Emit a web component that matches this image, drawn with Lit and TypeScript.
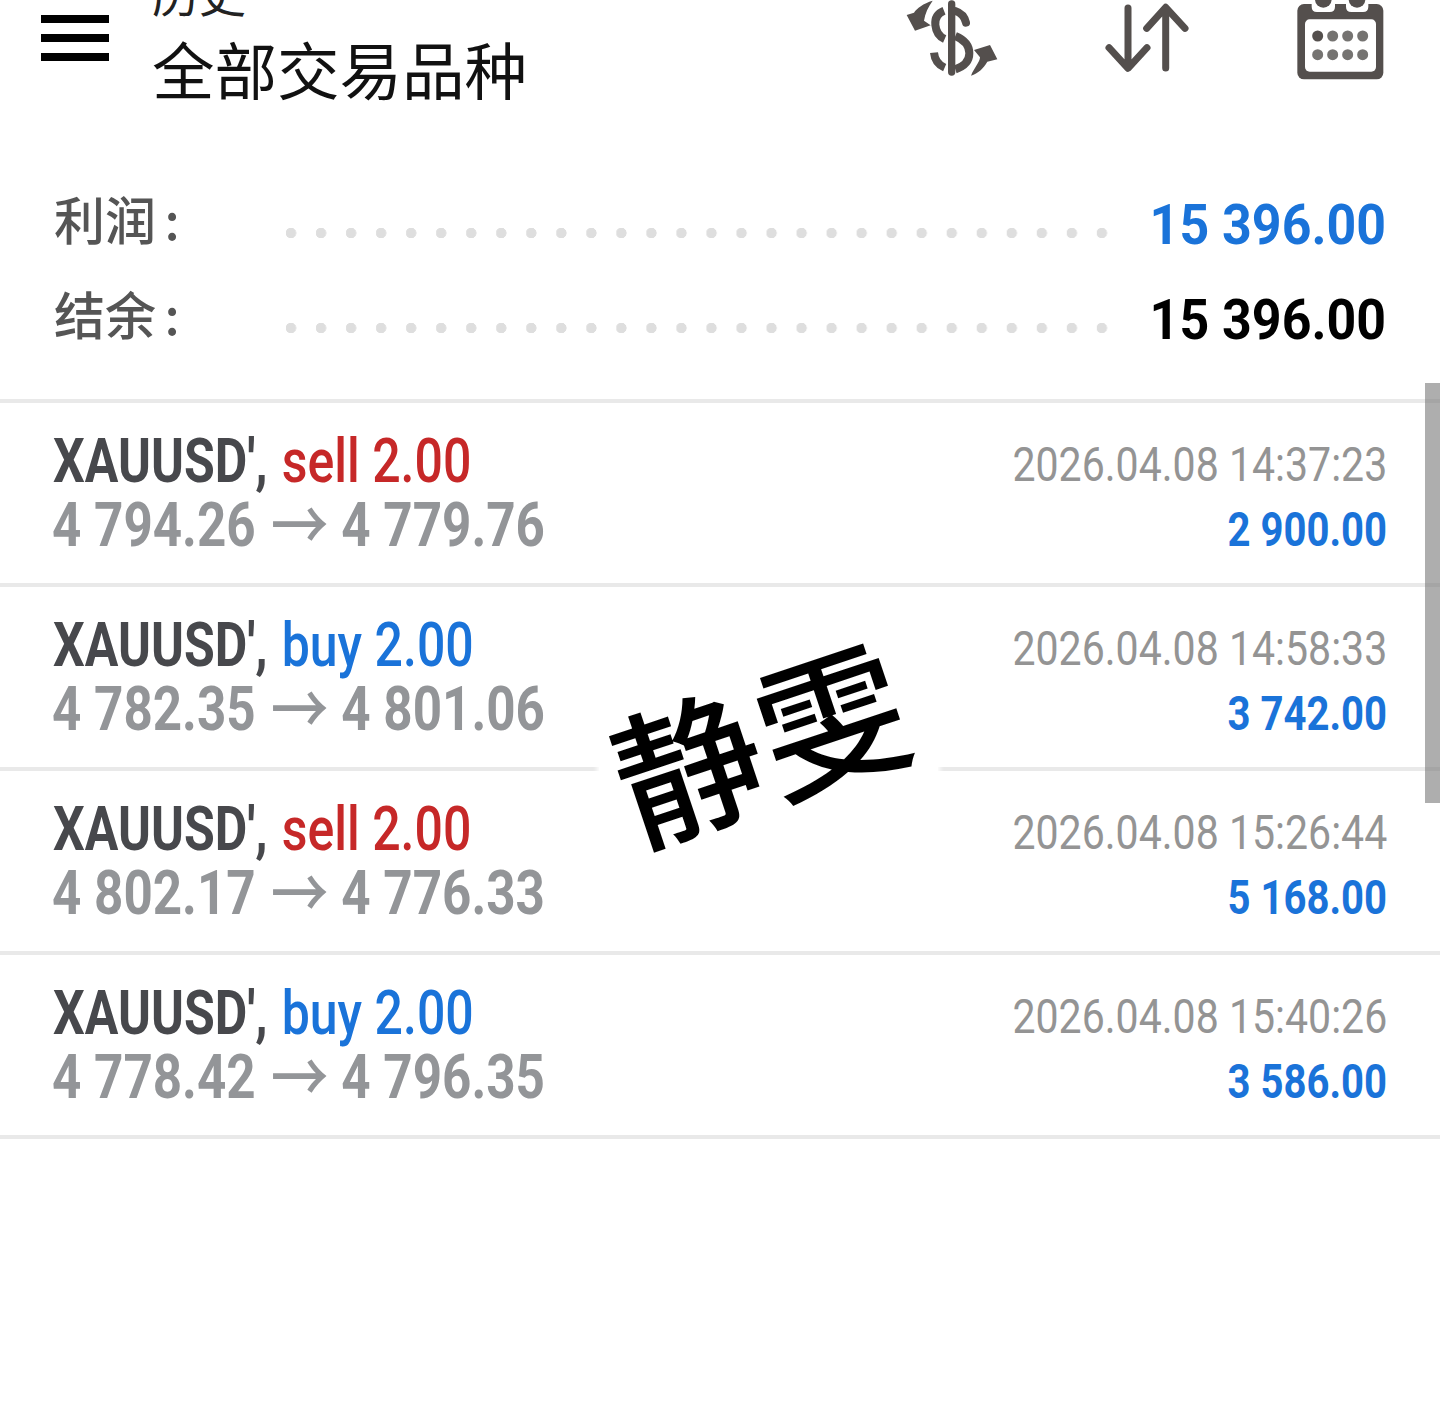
import { LitElement, html, css, svg } from "lit";
import { customElement } from "lit/decorators.js";

interface Deal { side: "sell" | "buy"; from: string; to: string; time: string; profit: string; }

const DEALS: Deal[] = [
  { side: "sell", from: "4 794.26", to: "4 779.76", time: "2026.04.08 14:37:23", profit: "2 900.00" },
  { side: "buy", from: "4 782.35", to: "4 801.06", time: "2026.04.08 14:58:33", profit: "3 742.00" },
  { side: "sell", from: "4 802.17", to: "4 776.33", time: "2026.04.08 15:26:44", profit: "5 168.00" },
  { side: "buy", from: "4 778.42", to: "4 796.35", time: "2026.04.08 15:40:26", profit: "3 586.00" },
];

const dollarIcon = svg`<svg class="ic" viewBox="0 0 315 240" width="105" height="80" fill="none" stroke="#544f4d">
  <path d="M155 12 V216" stroke-width="22" stroke-linecap="round"/>
  <path d="M198 68 C194 50 182 38 166 33" stroke-width="24" stroke-linecap="round"/>
  <path d="M132 32 C112 40 104 55 106 75 C108 95 118 110 134 117" stroke-width="24"/>
  <path d="M166 108 C190 118 208 135 208 160 C208 185 190 200 166 208" stroke-width="24"/>
  <path d="M102 158 C104 180 115 195 134 203" stroke-width="24"/>
  <path d="M98 2 C70 10 50 25 42 38 L20 45 L45 92 L92 76 L72 62 C75 40 85 20 98 2 Z" fill="#544f4d" stroke="none"/>
  <path d="M213 227 C222 205 240 185 240 172 L222 150 L270 135 L292 178 L262 185 C250 205 235 220 213 227 Z" fill="#544f4d" stroke="none"/>
</svg>`;

const sortIcon = svg`<svg class="ic sort" viewBox="0 0 90 80" width="90" height="80" fill="none" stroke="#544f4d" stroke-width="7" stroke-linecap="round" stroke-linejoin="round">
  <path d="M25 8 V68 M6 47.700 L25 68.300 L44 47.700"/>
  <path d="M62.700 8 V68 M43.700 28.300 L62.700 7.300 L82 28.300"/>
</svg>`;

const calCols = [0, 1, 2, 3];
const calendarIcon = svg`<svg class="ic" viewBox="0 0 300 255" width="100" height="85">
  <rect x="22" y="12" width="258" height="226" rx="20" fill="#544f4d"/>
  <rect x="45" y="58" width="213" height="157" rx="14" fill="#fff"/>
  <path d="M65 0 H135 V20 Q135 36 119 36 H81 Q65 36 65 20 Z M168 0 H235 V20 Q235 36 219 36 H184 Q168 36 168 20 Z" fill="#fff"/>
  <circle cx="100" cy="-2" r="25" fill="#544f4d"/><circle cx="201" cy="-2" r="25" fill="#544f4d"/>
  ${calCols.map((i) => svg`<circle cx="${83 + i * 45}" cy="108" r="16.500" fill="${i === 0 ? "#544f4d" : "#757371"}"/>`)}
  ${calCols.map((i) => svg`<circle cx="${83 + i * 45}" cy="164" r="16.500" fill="#757371"/>`)}
</svg>`;

@customElement("app-root")
export class AppRoot extends LitElement {
  static styles = css`
    :host {
      display: block;
      position: relative;
      width: 1440px;
      height: 1414px;
      overflow: hidden;
      background: #fff;
      font-family: Roboto, "Noto Sans CJK SC", sans-serif;
    }
    .sx { display: inline-block; white-space: nowrap; }
    .header { display: flex; height: 176px; box-sizing: border-box; padding: 0 50px 0 41px; overflow: hidden; }
    .burger { display: flex; flex-direction: column; gap: 11px; width: 68px; margin-top: 15px; margin-right: 43px; flex: none; }
    .burger i { display: block; height: 8px; background: #000; }
    .titles { flex: 1; font-family: "Noto Sans CJK SC", sans-serif; margin-top: -32px; }
    .t1 { font-size: 47px; line-height: 47px; color: #222; }
    .t2 { font-size: 62.500px; line-height: 90px; color: #111; margin-top: 8px; font-weight: 400; }
    .icons { display: flex; align-items: flex-start; gap: 98px; }
    .ic { display: block; flex: none; overflow: visible; }
    .sort { margin-right: -1px; }

    .summary { padding-bottom: 33px; }
    .sum-row { display: flex; align-items: center; height: 95px; padding: 0 54px; }
    .sum-label { width: 232px; flex: none; font-family: "Noto Sans CJK SC", sans-serif; font-size: 51px; font-weight: 500; line-height: 60px; margin-top: -11px; color: #555; white-space: nowrap; }
    .colon { margin-left: -3px; }
    .dots {
      flex: none; width: 830px; height: 12px; margin-top: 19px;
      background: radial-gradient(circle at 5px 6px, #dedede 5px, transparent 5.500px) 0 0 / 30.040px 12px repeat-x;
    }
    .sum-val { flex: 1; text-align: right; font-size: 56px; font-weight: 700; line-height: 95px; margin-top: 4px; }
    .sum-val .sx { transform: scaleX(0.927); transform-origin: right; }
    .blue { color: #1a73d9; }
    .black { color: #000; }

    .list { border-top: 4px solid #e9e9e9; }
    .row { display: flex; justify-content: space-between; height: 180px; border-bottom: 4px solid #e9e9e9; padding: 0 53px; }
    .left { padding-top: 25px; }
    .right { padding-top: 29px; text-align: right; }
    .line { height: 65px; line-height: 65px; white-space: nowrap; }
    .l1 .sx { transform: scaleX(0.807); transform-origin: left; }
    .l1 { font-size: 62px; }
    .sym { font-weight: 700; color: #47484c; margin-right: 2px; }
    .sell, .buy { font-weight: 500; }
    .sell { color: #c62828; }
    .buy { color: #1a73d9; }
    .l2 { font-size: 62px; font-weight: 700; color: #939598; margin-top: -1px; }
    .l2 .sx { transform: scaleX(0.825); transform-origin: left; margin-left: -1px; }
    .arrow { font-family: "Noto Sans CJK SC", sans-serif; font-weight: 500; font-size: 70px; line-height: 0; margin-left: 3px; vertical-align: -5px; }
    .right .sx { transform-origin: right; }
    .time { font-size: 49px; color: #949494; }
    .time .sx { transform: scaleX(0.838); }
    .amt { font-size: 48px; font-weight: 700; color: #1a73d9; }
    .amt .sx { transform: scaleX(0.835); }

    .scrollbar { position: absolute; right: 0; top: 383px; width: 15px; height: 420px; background: rgba(120, 120, 120, 0.6); }
    .stamp {
      position: absolute; left: 599px; top: 640px; width: 339px; height: 220px;
      background: #fff; border-radius: 60px; box-shadow: 0 0 5px 2px #fff;
      display: flex; justify-content: center; align-items: center;
    }
    .stamp span {
      display: block; font-family: "Noto Sans CJK SC", sans-serif; font-weight: 500; font-size: 148px; line-height: 1;
      color: #000; white-space: nowrap; transform: translate(-10px, -13px) rotate(-18.500deg); letter-spacing: 2px;
    }
  `;

  render() {
    return html`
      <div class="header">
        <div class="burger"><i></i><i></i><i></i></div>
        <div class="titles">
          <div class="t1">历史</div>
          <div class="t2">全部交易品种</div>
        </div>
        <div class="icons">${dollarIcon}${sortIcon}${calendarIcon}</div>
      </div>
      <div class="summary">
        <div class="sum-row">
          <div class="sum-label">利润 <span class="colon">:</span></div><div class="dots"></div>
          <div class="sum-val blue"><span class="sx">15 396.00</span></div>
        </div>
        <div class="sum-row">
          <div class="sum-label">结余 <span class="colon">:</span></div><div class="dots"></div>
          <div class="sum-val black"><span class="sx">15 396.00</span></div>
        </div>
      </div>
      <div class="list">
        ${DEALS.map((d) => html`
          <div class="row">
            <div class="left">
              <div class="line l1"><span class="sx"><span class="sym">XAUUSD',</span> <span class=${d.side}>${d.side} 2.00</span></span></div>
              <div class="line l2"><span class="sx">${d.from} <span class="arrow">→</span> ${d.to}</span></div>
            </div>
            <div class="right">
              <div class="line time"><span class="sx">${d.time}</span></div>
              <div class="line amt"><span class="sx">${d.profit}</span></div>
            </div>
          </div>
        `)}
      </div>
      <div class="scrollbar"></div>
      <div class="stamp"><span>静雯</span></div>
    `;
  }
}
